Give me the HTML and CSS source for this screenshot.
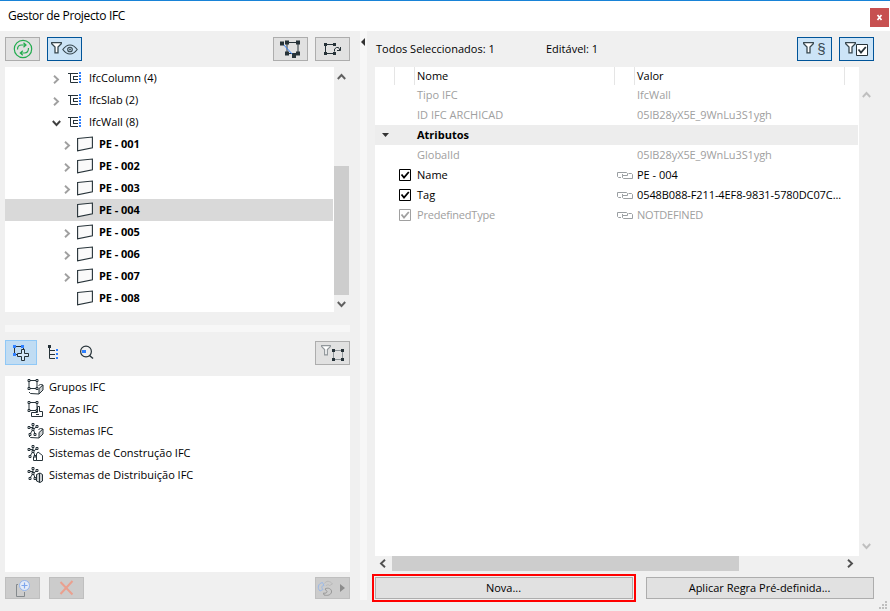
FILE: index.html
```html
<!DOCTYPE html>
<html lang="pt">
<head>
  <meta charset="UTF-8">
  <title>Gestor de Projecto IFC</title>
  <link rel="stylesheet" href="styles.css">
</head>
<body>
  <!-- Ícones partilhados -->
  <svg class="defs" width="0" height="0">
    <symbol id="right" viewBox="0 0 7 9"><path d="M1 .8 5 4.5 1 8.2" fill="none" stroke="currentColor" stroke-width="1.9"/></symbol>
    <symbol id="down" viewBox="0 0 9 7"><path d="M.8 1 4.5 5 8.2 1" fill="none" stroke="currentColor" stroke-width="1.9"/></symbol>
    <symbol id="up" viewBox="0 0 9 7"><path d="M.8 6 4.5 2 8.2 6" fill="none" stroke="currentColor" stroke-width="1.9"/></symbol>
    <symbol id="left" viewBox="0 0 7 9"><path d="M6 .8 2 4.5 6 8.2" fill="none" stroke="currentColor" stroke-width="1.9"/></symbol>
    <symbol id="class" viewBox="0 0 14 12">
      <path d="M0 1.500h10M2.500 1.500v9H10M5 4.500H10M5 7.500H10M5.500 4v4" fill="none" stroke="#263238"/>
      <path d="M11 0h2v2h-2zM11 3h2v2h-2zM11 6h2v2h-2zM11 9h2v2h-2z" fill="#2f80ff"/>
    </symbol>
    <symbol id="wall" viewBox="0 0 16 16"><path d="M.6 2.500 15.400 1v10.700L.6 14.900z" fill="#fafafa" stroke="#263238" stroke-width="1.100"/></symbol>
    <symbol id="funnel" viewBox="0 0 11 12"><path d="M.7.7h9.600v1L7 5v5.800H4V5L.7 1.700z" fill="#fff" stroke="currentColor" stroke-width="1.300"/></symbol>
    <symbol id="link" viewBox="0 0 16 8"><path d="M4 6.500H1.500l-1-1v-4h9l1 1v2h-5v-1.500M11.500 2.500h3l1 1v4h-9l-1-1v-2" fill="none" stroke="#9a9fa2"/></symbol>
    <symbol id="box" viewBox="0 0 16 16">
      <path d="M1.500 1.500h8v8h-8z" fill="none" stroke="#263238"/>
      <path d="M.5.5h2v2h-2zM8.500.5h2v2h-2zM.5 8.500h2v2h-2zM8.500 8.500h2v2h-2z" fill="#fff" stroke="#263238"/>
    </symbol>
    <symbol id="net" viewBox="0 0 16 16">
      <path d="M5.500 2v4M2 4.500h3.500M5.500 6.500 9.500 3.500M5.500 6.500 2.500 11M6 7l2 5" fill="none" stroke="#263238"/>
      <path d="M4.500.5h2v2h-2zM.5 3.500h2v2h-2zM8.500 2.500h2v2h-2zM4.500 5.500h2v2h-2zM1.500 10.500h2v2h-2zM6.500 10.500h2v2h-2z" fill="#fff" stroke="#263238"/>
    </symbol>
    <symbol id="solid" viewBox="0 0 16 16">
      <path d="M11.500 9.500 15.500 6v5l-4 4z" fill="#cfd2d4" stroke="#263238"/>
      <path d="M1.500 13l1.500 1.500 8.500.5M11 6.500l2-1 2.500.5" fill="none" stroke="#263238"/>
    </symbol>
    <symbol id="on" viewBox="0 0 12 12"><path d="M.5.5h11v11H.5z" fill="#fff" stroke="currentColor"/><path d="M2.500 5.500 5 8.500 9.800 3" fill="none" stroke="currentColor" stroke-width="1.800"/></symbol>
  </svg>

  <div class="titlebar">
    <span class="title">Gestor de Projecto IFC</span>
    <div class="close"><svg width="7" height="7" viewBox="0 0 7 7"><path d="M1.500 1l4 5M5.500 1l-4 5" stroke="#fff" stroke-width="1.700"/></svg></div>
  </div>

  <div class="main">
    <div class="left">
      <div class="toolbar">
        <div class="btn">
          <svg width="20" height="20" viewBox="0 0 20 20" fill="none" stroke="#22ac4f" stroke-width="1.200">
            <circle cx="10" cy="10" r="8.700"/>
            <path d="M4.500 10.500c0-3 1.500-4.500 4-4.500h4.500M10.500 3.700 13 6l-2.500 2.300M15.500 9c0 3-1.500 5-4 5H7.500M9.800 11.700 7.300 14l2.500 2.300"/>
          </svg>
        </div>
        <div class="btn active">
          <svg class="dark" width="11" height="12"><use href="#funnel"/></svg>
          <svg width="16" height="11" viewBox="0 0 16 11" fill="none" stroke="#37474f" stroke-width="1.100"><path d="M.8 5.500Q4 1 8 1t7.200 4.500Q12 10 8 10T.8 5.500z"/><circle cx="8" cy="5.500" r="2.300"/><circle cx="8" cy="5.500" r=".4"/></svg>
        </div>
        <div class="btn push">
          <svg width="21" height="18" viewBox="0 0 21 18">
            <path d="M7 2.500h11v11H7z" fill="none" stroke="#263238"/>
            <path d="M2 3l12 13" stroke="#2f80ff"/>
            <path d="M0 1.500h4v4H0zM5 .5h4v4H5zM16 .5h4v4h-4zM5 11.500h4v4H5zM16 11.500h4v4h-4zM12 14h4v4h-4z" fill="#263238"/>
          </svg>
        </div>
        <div class="btn">
          <svg width="19" height="14" viewBox="0 0 19 14">
            <path d="M11 2.500H2.500v9H11M11.500 9.500V7l2-1.500h2l1.500 3M14 8.500h3.500V5" fill="none" stroke="#263238"/>
            <path d="M1 1h3v3H1zM10 1h3v3h-3zM1 10h3v3H1zM10 10h3v3h-3z" fill="#263238"/>
          </svg>
        </div>
      </div>

      <div class="tree-box">
        <div class="tree">
          <div class="row"><svg class="chev" width="7" height="9"><use href="#right"/></svg><svg class="ico" width="14" height="12"><use href="#class"/></svg><span>IfcColumn (4)</span></div>
          <div class="row"><svg class="chev" width="7" height="9"><use href="#right"/></svg><svg class="ico" width="14" height="12"><use href="#class"/></svg><span>IfcSlab (2)</span></div>
          <div class="row"><svg class="chev open" width="9" height="7"><use href="#down"/></svg><svg class="ico" width="14" height="12"><use href="#class"/></svg><span>IfcWall (8)</span></div>
          <div class="row sub"><svg class="chev" width="7" height="9"><use href="#right"/></svg><svg class="wall" width="16" height="16"><use href="#wall"/></svg><span>PE - 001</span></div>
          <div class="row sub"><svg class="chev" width="7" height="9"><use href="#right"/></svg><svg class="wall" width="16" height="16"><use href="#wall"/></svg><span>PE - 002</span></div>
          <div class="row sub"><svg class="chev" width="7" height="9"><use href="#right"/></svg><svg class="wall" width="16" height="16"><use href="#wall"/></svg><span>PE - 003</span></div>
          <div class="row sub selected leaf"><svg class="wall" width="16" height="16"><use href="#wall"/></svg><span>PE - 004</span></div>
          <div class="row sub"><svg class="chev" width="7" height="9"><use href="#right"/></svg><svg class="wall" width="16" height="16"><use href="#wall"/></svg><span>PE - 005</span></div>
          <div class="row sub"><svg class="chev" width="7" height="9"><use href="#right"/></svg><svg class="wall" width="16" height="16"><use href="#wall"/></svg><span>PE - 006</span></div>
          <div class="row sub"><svg class="chev" width="7" height="9"><use href="#right"/></svg><svg class="wall" width="16" height="16"><use href="#wall"/></svg><span>PE - 007</span></div>
          <div class="row sub leaf"><svg class="wall" width="16" height="16"><use href="#wall"/></svg><span>PE - 008</span></div>
        </div>
        <div class="vscroll">
          <svg width="9" height="7"><use href="#up"/></svg>
          <div class="thumb"></div>
          <svg width="9" height="7"><use href="#down"/></svg>
        </div>
      </div>

      <div class="splitter"></div>

      <div class="toolbar tabs">
        <div class="tab on">
          <svg width="18" height="17" viewBox="0 0 18 17">
            <path d="M2.500 2.500h9V6M2.500 2.500v8H5" fill="none" stroke="#263238"/>
            <path d="M9.500 5.500h3v4h4v3h-4v4h-3v-4h-4v-3h4z" fill="#d5e8f8" stroke="#263238"/>
            <path d="M1 1h3v3H1zM9 1h3v3H9zM1 9h3v3H1z" fill="#2f80ff"/>
          </svg>
        </div>
        <div class="tab">
          <svg width="13" height="15" viewBox="0 0 13 15">
            <path d="M2.500 2v11.500H8M2.500 5.500H8M2.500 9.500H8" fill="none" stroke="#263238"/>
            <path d="M1 0h3v3H1z" fill="#263238"/>
            <path d="M9 4h2v2H9zM9 8h2v2H9zM9 12h2v2H9z" fill="#2f80ff"/>
          </svg>
        </div>
        <div class="tab search">
          <svg width="15" height="15" viewBox="0 0 15 15">
            <circle cx="7" cy="6.500" r="5.400" fill="none" stroke="#263238" stroke-width="1.200"/>
            <path d="M10.500 10.500l3.500 3" stroke="#263238" stroke-width="1.500"/>
            <path d="M3 5h4v3H3z" fill="#2f80ff"/>
          </svg>
        </div>
        <div class="btn push filter">
          <svg class="grey" width="10" height="11" viewBox="0 0 11 12"><use href="#funnel"/></svg>
          <svg width="12" height="12" viewBox="0 0 12 12">
            <path d="M1.500 1.500h9v9h-9z" fill="none" stroke="#90969a"/>
            <path d="M0 0h3v3H0zM9 0h3v3H9zM0 9h3v3H0zM9 9h3v3H9z" fill="#263238"/>
          </svg>
        </div>
      </div>

      <div class="groups">
        <div class="row"><svg width="17" height="16"><use href="#box"/><use href="#solid"/></svg><span>Grupos IFC</span></div>
        <div class="row"><svg width="17" height="16"><use href="#box"/><path d="M4.500 15.500v-4h6V5.500h2V10.500h3v5zM9 13.500h3" fill="#fff" stroke="#263238"/></svg><span>Zonas IFC</span></div>
        <div class="row"><svg width="17" height="16"><use href="#net"/><use href="#solid"/></svg><span>Sistemas IFC</span></div>
        <div class="row"><svg width="17" height="16"><use href="#net"/><path d="M6.500 15.500V12h3v3.500zM9.500 15.500V9l1.500-2 4.500 3.500v5z" fill="#fff" stroke="#263238"/></svg><span>Sistemas de Construção IFC</span></div>
        <div class="row"><svg width="17" height="16"><use href="#net"/><path d="M9.500 7.500 13 6l2.500 1.500V14L13 15.500 9.500 14zM12.500 6v9.500" fill="#cfd2d4" stroke="#263238"/></svg><span>Sistemas de Distribuição IFC</span></div>
      </div>

      <div class="footer">
        <div class="btn off">
          <svg width="17" height="19" viewBox="0 0 17 19">
            <path d="M4 5.500H2.500v12h8V13" fill="none" stroke="#84898c"/>
            <circle cx="10.500" cy="6.500" r="5" fill="#e4ebf7" stroke="#93b5ee"/>
            <path d="M7.500 6.500h6M10.500 3.500v6" stroke="#7da6ee" stroke-width="1.200"/>
          </svg>
        </div>
        <div class="btn off"><svg width="15" height="16" viewBox="0 0 15 16"><path d="M1.500 2l12 12.500M13.500 1 1.500 14" stroke="#eaa08f" stroke-width="2"/></svg></div>
        <div class="btn off push menu">
          <svg width="17" height="17" viewBox="0 0 17 17" fill="none">
            <path d="M5.500 2.500C1 3.500 0 8 3 11l3-1.500C4 7 4.500 6 7 5.500z" stroke="#9bb9e8"/>
            <path d="M7.500 3.500C9 .5 13 .5 15.500 4l-3 1.500C11 4 9.500 5 9 6" stroke="#bababa"/>
            <path d="M8 9c3-2 7 0 6.500 3-.5 3-4 4-7.500 3l-.5-2c2 .5 3.500 0 3.500-1.500z" stroke="#999"/>
          </svg>
          <svg width="5" height="8" viewBox="0 0 5 8"><path d="M0 0l5 4-5 4z" fill="#8c8c8c"/></svg>
        </div>
      </div>
    </div>

    <div class="divider"><svg width="4" height="8" viewBox="0 0 4 8"><path d="M4 0v8L0 4z" fill="#333"/></svg></div>

    <div class="right">
      <div class="toolbar info">
        <span class="count">Todos Seleccionados: 1</span>
        <span class="editable">Editável: 1</span>
        <div class="btn active push">
          <svg class="dark" width="11" height="12"><use href="#funnel"/></svg>
          <span class="sect">§</span>
        </div>
        <div class="btn active">
          <svg class="dark" width="11" height="12"><use href="#funnel"/></svg>
          <svg class="check" width="12" height="12"><use href="#on"/></svg>
        </div>
      </div>

      <div class="grid-box">
        <div class="grid">
          <div class="line head"><i></i><i></i><span class="name">Nome</span><i></i><span class="value">Valor</span></div>
          <div class="line dim"><i></i><i></i><span class="name">Tipo IFC</span><i></i><span class="value">IfcWall</span></div>
          <div class="line dim"><i></i><i></i><span class="name">ID IFC ARCHICAD</span><i></i><span class="value id">05IB28yX5E_9WnLu3S1ygh</span></div>
          <div class="line group"><i><svg width="7" height="4" viewBox="0 0 7 4"><path d="M0 0h7L3.500 4z" fill="#333"/></svg></i><i></i><span class="name">Atributos</span></div>
          <div class="line dim"><i></i><i></i><span class="name">GlobalId</span><i></i><span class="value id">05IB28yX5E_9WnLu3S1ygh</span></div>
          <div class="line"><i></i><i><svg width="12" height="12"><use href="#on"/></svg></i><span class="name">Name</span><i><svg width="16" height="8"><use href="#link"/></svg></i><span class="value">PE - 004</span></div>
          <div class="line"><i></i><i><svg width="12" height="12"><use href="#on"/></svg></i><span class="name">Tag</span><i><svg width="16" height="8"><use href="#link"/></svg></i><span class="value tag">0548B088-F211-4EF8-9831-5780DC07C...</span></div>
          <div class="line dim"><i></i><i><svg width="12" height="12"><use href="#on"/></svg></i><span class="name type">PredefinedType</span><i><svg width="16" height="8"><use href="#link"/></svg></i><span class="value type">NOTDEFINED</span></div>
        </div>
        <div class="side">
          <svg width="9" height="7"><use href="#up"/></svg>
          <svg width="9" height="7"><use href="#down"/></svg>
        </div>
      </div>
      <div class="hscroll">
        <svg width="7" height="9"><use href="#left"/></svg>
        <div class="hthumb"></div>
        <svg width="7" height="9"><use href="#right"/></svg>
      </div>

      <div class="actions">
        <div class="highlight"><div class="action">Nova...</div></div>
        <div class="action apply">Aplicar Regra Pré-definida...</div>
      </div>
    </div>
  </div>
  <svg class="grip" width="8" height="8" viewBox="0 0 8 8"><path d="M6 0h2v2H6zM3 3h2v2H3zM6 3h2v2H6zM0 6h2v2H0zM3 6h2v2H3zM6 6h2v2H6z" fill="#bfbfbf"/></svg>
</body>
</html>
```
FILE: styles.css
```css
* {
  box-sizing: border-box;
}
body {
  margin: 0;
  width: 890px;
  height: 611px;
  overflow: hidden;
  background: #f0f0f0;
  font-family: "Open Sans", "Noto Sans", sans-serif;
  font-size: 11px;
  color: #000;
  white-space: nowrap;
}
svg {
  display: block;
  flex: none;
}
.defs {
  position: absolute;
}
.titlebar {
  display: flex;
  justify-content: space-between;
  height: 31px;
  padding: 7px 1px 0 8px;
  background: #fff;
  border-top: 1px solid #1883d7;
}
.title {
  font-size: 12px;
  line-height: 16px;
  letter-spacing: -0.34px;
}
.close {
  display: flex;
  align-items: center;
  justify-content: center;
  width: 19px;
  height: 19px;
  background: #c75050;
}
.main {
  display: flex;
  height: 580px;
  padding-left: 5px;
}
.left {
  width: 345px;
}
.toolbar {
  display: flex;
  gap: 7px;
  height: 36px;
  padding-top: 6px;
}
.btn {
  display: flex;
  align-items: center;
  justify-content: center;
  width: 35px;
  height: 24px;
  background: #e1e1e1;
  border: 1px solid #adadad;
}
.btn.active {
  background: #cce4f7;
  border-color: #005499;
}
.btn.off {
  height: 22px;
  background: #ccc;
  border-color: #bfbfbf;
}
.push {
  margin-left: auto;
}
.dark {
  color: #37474f;
  margin-bottom: 3px;
}
.grey {
  color: #90969a;
  margin: 0 1px 5px 0;
}

/* Árvore */
.tree-box {
  display: flex;
  height: 245px;
}
.tree {
  width: 329px;
  background: #fff;
}
.row {
  display: flex;
  align-items: center;
  height: 22px;
  padding-left: 47px;
}
.row span {
  line-height: 20px;
  padding-bottom: 1px;
}
.chev {
  width: 9px;
  margin-top: 2px;
  color: #a0a0a0;
}
.chev.open {
  color: #404040;
}
.ico {
  margin: 0 7px;
}
.wall {
  margin: 0 6px 0 5px;
}
.sub {
  padding-left: 58px;
  font-weight: bold;
}
.sub span {
  letter-spacing: -0.05px;
}
.leaf {
  padding-left: 67px;
}
.selected {
  width: 328px;
  background: #d9d9d9;
}
.vscroll {
  display: flex;
  flex-direction: column;
  align-items: center;
  width: 15px;
  padding: 6px 0 4px;
  color: #606060;
}
.thumb {
  width: 15px;
  height: 129px;
  margin: auto 0 6px;
  background: #cdcdcd;
}
.splitter {
  height: 7px;
  margin-top: 13px;
  background: #f7f7f7;
}
.tabs {
  gap: 0;
  height: 44px;
  padding-top: 8px;
}
.tab {
  display: flex;
  align-items: center;
  justify-content: center;
  width: 32px;
  height: 25px;
}
.tab.on {
  background: #c0dcf3;
  border: 1px solid #90c8f6;
}
.search {
  margin-left: 1px;
}
.filter {
  margin-top: 1px;
}
.filter svg:last-child {
  margin-top: 3px;
}

/* Grupos */
.groups {
  height: 196px;
  background: #fff;
}
.groups .row {
  padding-left: 22px;
}
.groups svg {
  margin-right: 5px;
}
.footer {
  display: flex;
  gap: 9px;
  padding-top: 5px;
}
.menu {
  justify-content: space-between;
  padding: 0 4px 0 1px;
}
.divider {
  width: 7px;
  height: 569px;
  margin: 0 8px 0 10px;
  padding: 7px 0 0 1px;
  background: #f7f7f7;
}

/* Propriedades */
.right {
  width: 515px;
}
.info {
  padding-right: 16px;
}
.count {
  width: 164px;
  line-height: 24px;
  padding-left: 1px;
}
.editable {
  line-height: 24px;
}
.sect {
  margin: 0 0 1px 3px;
  font-family: "Liberation Sans", Arial, sans-serif;
  font-size: 15px;
  line-height: 20px;
  color: #37474f;
}
.check {
  margin-top: 2px;
  color: #263238;
}
.grid-box {
  display: flex;
  height: 489px;
}
.grid {
  width: 484px;
  background: #fff;
}
.line {
  display: flex;
  align-items: center;
  width: 483px;
  height: 20px;
}
.line i {
  display: flex;
  align-items: center;
  justify-content: center;
  width: 20px;
  height: 100%;
}
.name,
.value {
  padding: 0 0 2px 2px;
}
.name {
  width: 200px;
}
.type {
  letter-spacing: -0.2px;
}
.tag,
.id {
  letter-spacing: -0.1px;
}
.head {
  height: 18px;
}
.head i,
.head .name,
.head .value {
  border-right: 1px solid #e5e5e5;
}
.head .name,
.head .value {
  height: 18px;
  padding-bottom: 0;
  line-height: 18px;
}
.head .value {
  width: 210px;
}
.dim {
  color: #a0a0a0;
}
.group {
  background: #ededed;
  font-weight: bold;
}
.side {
  display: flex;
  flex-direction: column;
  justify-content: space-between;
  padding: 24px 0 6px 3px;
  color: #bfbfbf;
}
.hscroll {
  display: flex;
  align-items: center;
  justify-content: space-between;
  width: 483px;
  height: 15px;
  padding: 0 4px;
  color: #505050;
}
.hthumb {
  width: 347px;
  height: 15px;
  margin: 0 auto 0 6px;
  background: #cdcdcd;
}
.actions {
  display: flex;
  gap: 10px;
  margin: 3px 0 0 -3px;
}
.highlight {
  width: 264px;
  height: 28px;
  padding: 1px;
  border: 2px solid #f00;
}
.action {
  height: 22px;
  padding-right: 1px;
  line-height: 20px;
  text-align: center;
  background: #e1e1e1;
  border: 1px solid #adadad;
}
.apply {
  width: 228px;
  margin-top: 3px;
}
.grip {
  position: absolute;
  right: 3px;
  bottom: 2px;
}
```
